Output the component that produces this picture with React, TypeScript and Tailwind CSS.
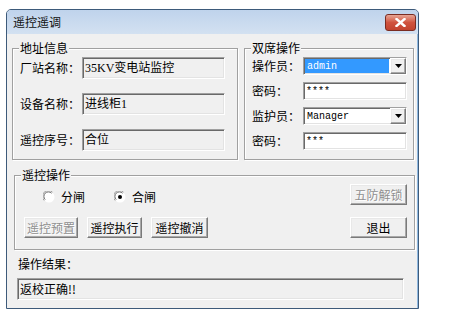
import React from 'react'

const sunken =
  'border border-t-[#a0a0a0] border-l-[#a0a0a0] border-b-white border-r-white shadow-[inset_1px_1px_0_#696969,inset_-1px_-1px_0_#e3e3e3]'
const raised =
  'border border-t-white border-l-white border-b-[#7a7a7a] border-r-[#7a7a7a] shadow-[inset_-1px_-1px_0_#a8a8a8,inset_1px_1px_0_#e8e8e8] bg-[#f0f0f0]'
const mono = "font-['Liberation_Mono','Noto_Sans_CJK_SC',monospace] text-[10px]"
const serif = "font-['Liberation_Serif','Noto_Sans_CJK_SC',serif] text-[12px]"

function Group({ title, className, children }: { title: string; className: string; children: React.ReactNode }) {
  return (
    <div className={`flex flex-col border border-[#a0a0a0] shadow-[inset_1px_1px_0_#fff,1px_1px_0_#fff] ${className}`}>
      <span className="-mt-[8px] ml-[6px] self-start bg-[#f0f0f0] px-[1px] h-[14px] leading-[14px] text-[12px]">
        {title}
      </span>
      {children}
    </div>
  )
}

function Combo({ value, selected }: { value: string; selected?: boolean }) {
  return (
    <div className={`${sunken} bg-white h-[18px] w-[104px] flex items-stretch`}>
      <div className="flex-1 p-[1px] flex">
        <span
          className={`flex-1 flex items-center pl-[2px] ${mono} ${selected ? 'bg-[#3399ff] text-white' : 'text-black'}`}
        >
          {value}
        </span>
      </div>
      <div className={`${raised} w-[16px] flex items-center justify-center`}>
        <svg width="7" height="4" viewBox="0 0 7 4">
          <path d="M0 0h7L3.5 4z" fill="#000" />
        </svg>
      </div>
    </div>
  )
}

function Radio({ label, checked }: { label: string; checked?: boolean }) {
  return (
    <div className="flex items-center gap-[6px]">
      <svg width="12" height="12" viewBox="0 0 12 12">
        <circle cx="6" cy="6" r="5.5" fill="#fff" />
        <path d="M1.2 9.5A5.5 5.5 0 0 1 9.5 1.2" fill="none" stroke="#a0a0a0" strokeWidth="1" />
        <path d="M2.2 8.6A4.3 4.3 0 0 1 8.6 2.2" fill="none" stroke="#696969" strokeWidth="1" />
        {checked && <circle cx="6" cy="6" r="2" fill="#000" />}
      </svg>
      <span className="text-[12px] leading-[14px]">{label}</span>
    </div>
  )
}

function Btn({ label, w, disabled }: { label: string; w: string; disabled?: boolean }) {
  return (
    <div
      className={`${raised} ${w} h-[21px] flex items-center justify-center text-[12px] ${
        disabled ? 'text-[#8f8f8f] [text-shadow:1px_1px_0_#fff]' : 'text-black'
      }`}
    >
      {label}
    </div>
  )
}

export default function App() {
  return (
    <div className="w-[471px] h-[312px] bg-white pt-[9px] pl-[6px] font-['Noto_Sans_CJK_SC',sans-serif] text-black">
      <div className="w-[413px] h-[300px] flex flex-col border border-[#3d5a7a] rounded-t-[5px] bg-[#f0f0f0] shadow-[inset_-1px_0_0_#8fb8e0]">
        {/* title bar */}
        <div className="h-[24px] flex items-center pl-[6px] pr-[2px] rounded-t-[4px] bg-gradient-to-b from-[#bfd3ec] to-[#d3e1f1]">
          <span className="text-[12px] text-[#111]">遥控遥调</span>
          <div className="ml-auto mt-[1px] w-[31px] h-[17px] rounded-[3px] border border-[#7a2c22] bg-gradient-to-b from-[#e6a596] via-[#d0533f] to-[#c2432f] flex items-center justify-center">
            <svg width="11" height="9" viewBox="0 0 11 9">
              <path d="M1.5 1l8 7M9.5 1l-8 7" stroke="#fff" strokeWidth="2.4" strokeLinecap="square" />
            </svg>
          </div>
        </div>

        {/* client */}
        <div className="flex flex-col">
          <div className="flex gap-[6px] ml-[5px] mt-[14px]">
            <Group title="地址信息" className="w-[226px] h-[112px]">
              <div className="mt-[2px] ml-[7px] flex flex-col gap-[14px]">
                {[
                  ['厂站名称：', '35KV变电站监控'],
                  ['设备名称：', '进线柜1'],
                  ['遥控序号：', '合位'],
                ].map(([k, v]) => (
                  <div key={k} className="grid grid-cols-[62px_143px] items-center">
                    <span className="text-[12px]">{k}</span>
                    <div className={`${sunken} h-[22px] bg-[#f0f0f0] flex items-center pl-[2px] ${serif}`}>{v}</div>
                  </div>
                ))}
              </div>
            </Group>

            <Group title="双席操作" className="w-[170px] h-[112px]">
              <div className="mt-[2px] ml-[7px] flex flex-col gap-[7px]">
                <div className="grid grid-cols-[51px_104px] items-center">
                  <span className="text-[12px]">操作员：</span>
                  <Combo value="admin" selected />
                </div>
                <div className="grid grid-cols-[51px_104px] items-center">
                  <span className="text-[12px]">密码：</span>
                  <div className={`${sunken} h-[18px] bg-white flex items-center pl-[2px] ${mono}`}>****</div>
                </div>
                <div className="grid grid-cols-[51px_104px] items-center">
                  <span className="text-[12px]">监护员：</span>
                  <Combo value="Manager" />
                </div>
                <div className="grid grid-cols-[51px_104px] items-center">
                  <span className="text-[12px]">密码：</span>
                  <div className={`${sunken} h-[18px] bg-white flex items-center pl-[2px] ${mono}`}>***</div>
                </div>
              </div>
            </Group>
          </div>

          <Group title="遥控操作" className="ml-[7px] mt-[15px] w-[401px] h-[75px]">
            <div className="flex">
              <div className="flex flex-col">
                <div className="mt-[8px] ml-[28px] h-[14px] flex items-center gap-[29px]">
                  <Radio label="分闸" />
                  <Radio label="合闸" checked />
                </div>
                <div className="mt-[13px] ml-[9px] flex gap-[9px]">
                  <Btn label="遥控预置" w="w-[54px]" disabled />
                  <Btn label="遥控执行" w="w-[55px]" />
                  <Btn label="遥控撤消" w="w-[57px]" />
                </div>
              </div>
              <div className="ml-auto mr-[7px] flex flex-col">
                <div className="mt-[2px]">
                  <Btn label="五防解锁" w="w-[57px]" disabled />
                </div>
                <div className="mt-[12px]">
                  <Btn label="退出" w="w-[57px]" />
                </div>
              </div>
            </div>
          </Group>

          <span className="ml-[11px] mt-[7px] h-[14px] leading-[14px] text-[12px]">操作结果：</span>
          <div className={`${sunken} ml-[10px] mt-[7px] w-[387px] h-[22px] bg-[#f0f0f0] flex items-center pl-[2px] text-[12px]`}>
            返校正确!!
          </div>
        </div>
      </div>
    </div>
  )
}
